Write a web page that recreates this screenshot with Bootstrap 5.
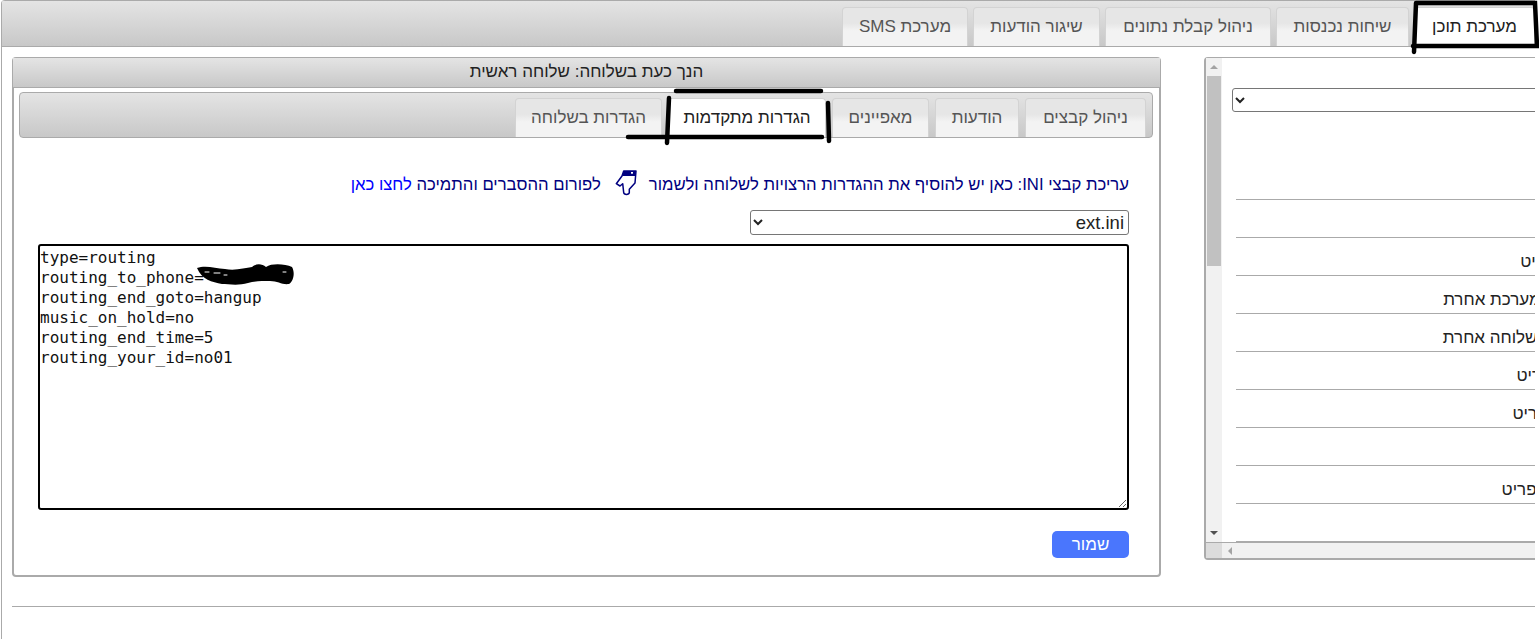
<!DOCTYPE html>
<html lang="he" dir="rtl">
<head>
<meta charset="utf-8">
<title>מערכת תוכן</title>
<link rel="stylesheet" href="https://cdn.jsdelivr.net/npm/bootstrap@5.3.0/dist/css/bootstrap.min.css">
<style>
html,body{height:639px;overflow:hidden;background:#fff}
body{font-family:"Liberation Sans",Arial,sans-serif;font-size:17px;color:#222;position:relative}
.shell{border-left:1px solid #aaa;height:639px;width:1534px;margin-left:1px;margin-right:auto;overflow:hidden;border-radius:4px 0 0 0}
.gbar{background:linear-gradient(#e4e4e4,#c8c8c8)}
.topbar{height:47px;border-top:1px solid #aaa;border-bottom:1px solid #aaa;padding:6px 0 0 0;gap:5px}
.uitab{height:100%;margin:0 0 -1px;border:1px solid #d3d3d3;border-bottom:0;border-radius:4px 4px 0 0;background:linear-gradient(#e6e6e6 0,#e6e6e6 40%,#f3f3f3 60%,#f3f3f3 100%);color:#555;font-size:17px;display:flex;align-items:center;justify-content:center;white-space:nowrap}
.uitab.on{background:#fff;color:#212121}
.t1{width:121px}.t2{width:133px}.t3{width:166px}.t4{width:127px}.t5{width:126px}
.work{padding:10px 0 0 10px;gap:43px}
.mainp{width:1149px;height:520px;flex:none;border:2px solid #aaa;border-top:1px solid #aaa;border-radius:4px;background:#fff;padding:0}
.headp{height:30px;font-size:17px;line-height:28px;text-align:center;color:#222;border-bottom:1px solid #aaa;margin:0 -1px}
.bodyp{padding:4px 3px 0 2px}
.innerbar{height:46px;border:1px solid #aaa;border-radius:4px;margin:0 3px 0 3px;padding:5px 6px 0 0;gap:6px}
.s1{width:121px}.s2{width:84px}.s3{width:97px}.s4{width:158px}.s5{width:147px}
.formp{padding:32px 21px 0 22px}
.notep{color:#000080;font-size:16.7px;line-height:30px;height:30px;margin:0 6px 0 0;white-space:nowrap;text-align:right}
.notep a{color:#00f;text-decoration:none}
.handi{width:23px;height:26px;margin:0 11px 0 14px;vertical-align:-6px}
.nsel{display:block;width:379px;height:25px;margin:10px 6px 9px 0;border:1px solid #767676;border-radius:3px;background:#fff;font-size:18.5px;color:#222;font-family:"Liberation Sans",Arial,sans-serif;padding:0}
.area{display:block;width:1091px;height:266px;border:2px solid #000;border-radius:3px;margin:0 6px 0 0;padding:2px 1px 1px 0;font:16px/20px "DejaVu Sans Mono","Liberation Mono",monospace;color:#111;resize:both;background:#fff;overflow:hidden;outline:0}
.savebtn{display:block;width:77px;height:27px;margin:21px 6px 0 0;border:0;border-radius:5px;background:#4a76fd;color:#fff;font-size:17px;line-height:27px;padding:0}
.sidep{width:500px;height:503px;flex:none;border:2px solid #aaa;border-top:1px solid #aaa;border-radius:4px 0 0 4px;background:#fff}
.vtrack{width:16px;background:#f1f1f1;flex:none;padding:0 1px}
.vup,.vdn{height:18px;display:flex;align-items:center;justify-content:center}
.vthumb{height:190px;background:#c1c1c1;margin-bottom:auto}
.arrU{width:0;height:0;border:4px solid transparent;border-top:0;border-bottom:4px solid #a3a3a3}
.arrD{width:0;height:0;border:4px solid transparent;border-bottom:0;border-top:4px solid #505050}
.arrL{width:0;height:0;border:4px solid transparent;border-left:0;border-right:4px solid #a3a3a3;margin-left:6px}
.sidec{padding-top:30px;padding-left:10px;min-width:0}
.sidec .nsel{width:auto;height:24px;margin:0;font-size:15px}
.linesb{padding:50px 0 0 4px}
.sline{height:38px;border-bottom:1px solid #aaa;padding-top:12px;line-height:24px;text-align:right;font-size:17px;color:#222;white-space:nowrap}
.r3{padding-right:100px}.r4{padding-right:108px}.r5{padding-right:111px}.r6{padding-right:113px}.r7{padding-right:120px}.r9{padding-right:124px}
.hbar{height:16px;background:#f1f1f1;flex:none;border-top:1px solid #aaa}
.hcorner{width:16px;background:#dcdcdc;flex:none}
.rulep{position:absolute;left:12px;width:1523px;top:606px;height:1px;background:#aaa}
.inkp{position:absolute;left:0;top:0;pointer-events:none}
</style>
</head>
<body>
<div class="shell">
  <ul class="nav topbar gbar">
    <li class="uitab on t1">מערכת תוכן</li>
    <li class="uitab t2">שיחות נכנסות</li>
    <li class="uitab t3">ניהול קבלת נתונים</li>
    <li class="uitab t4">שיגור הודעות</li>
    <li class="uitab t5">מערכת SMS</li>
  </ul>
  <div class="d-flex work" dir="ltr">
    <section class="mainp" dir="rtl">
      <div class="headp gbar">הנך כעת בשלוחה: שלוחה ראשית</div>
      <div class="bodyp">
        <ul class="nav innerbar gbar">
          <li class="uitab s1">ניהול קבצים</li>
          <li class="uitab s2">הודעות</li>
          <li class="uitab s3">מאפיינים</li>
          <li class="uitab on s4">הגדרות מתקדמות</li>
          <li class="uitab s5">הגדרות בשלוחה</li>
        </ul>
        <form class="formp">
          <p class="notep">עריכת קבצי INI: כאן יש להוסיף את ההגדרות הרצויות לשלוחה ולשמור<svg class="handi" viewBox="0 0 23 26"><path d="M8.7 1H21L20 13 14.3 19.3V22.7C14 25 9 25 8.7 22.7L7.7 13.7 5 16 1.3 13.7 7 6z" fill="#fff" stroke="#000080" stroke-width="1.5" stroke-linejoin="round"/><path d="M8.7 1H21L20.3 6H7.3z" fill="#000080"/><rect x="16" y="2" width="2" height="1.7" fill="#fff"/></svg>לפורום ההסברים והתמיכה <a href="#">לחצו כאן</a></p>
          <select class="nsel"><option>ext.ini</option></select>
          <textarea class="area" dir="ltr" spellcheck="false">type=routing
routing_to_phone=
routing_end_goto=hangup
music_on_hold=no
routing_end_time=5
routing_your_id=no01</textarea>
          <button type="button" class="savebtn">שמור</button>
        </form>
      </div>
    </section>
    <aside class="sidep d-flex flex-column" dir="ltr">
      <div class="d-flex flex-grow-1 overflow-hidden">
        <div class="vtrack d-flex flex-column">
          <div class="vup"><span class="arrU"></span></div>
          <div class="vthumb"></div>
          <div class="vdn"><span class="arrD"></span></div>
        </div>
        <div class="sidec flex-grow-1" dir="rtl">
          <select class="nsel w-100"><option></option></select>
          <div class="linesb">
            <div class="sline">&nbsp;</div>
            <div class="sline">&nbsp;</div>
            <div class="sline r3">העתק פריט</div>
            <div class="sline r4">העבר למערכת אחרת</div>
            <div class="sline r5">העבר לשלוחה אחרת</div>
            <div class="sline r6">מחק פריט</div>
            <div class="sline r7">שנה פריט</div>
            <div class="sline">&nbsp;</div>
            <div class="sline r9">הוסף פריט</div>
            <div class="sline">&nbsp;</div>
          </div>
        </div>
      </div>
      <div class="d-flex hbar">
        <div class="hcorner"></div>
        <div class="d-flex align-items-center"><span class="arrL"></span></div>
      </div>
    </aside>
  </div>
</div>
<div class="rulep"></div>
<svg class="inkp" width="1539" height="639" viewBox="0 0 1539 639" fill="none" stroke="#000" stroke-width="4.5" stroke-linecap="round">
  <path d="M1416 3H1535L1537 46H1413M1416 3L1414 52"/>
  <path d="M676 91H821M628 137H822M669 98L667 143M828 103L829 141"/>
  <path d="M197 268C205 265 215 268 225 269 235 271 245 268 252 267 257 263 262 264 266 267 272 263 285 264 292 267 295 272 294 281 289 284 282 285 278 281 270 281 262 281 255 281 248 283 238 286 228 284 222 284 212 282 202 280 197 268Z" fill="#000" stroke="none"/>
  <path d="M205 272h4M214 273h6M224 275h3M283 272h3" stroke="#fff" stroke-width="1"/>
</svg>
<script src="https://cdn.jsdelivr.net/npm/bootstrap@5.3.0/dist/js/bootstrap.bundle.min.js"></script>
</body>
</html>
